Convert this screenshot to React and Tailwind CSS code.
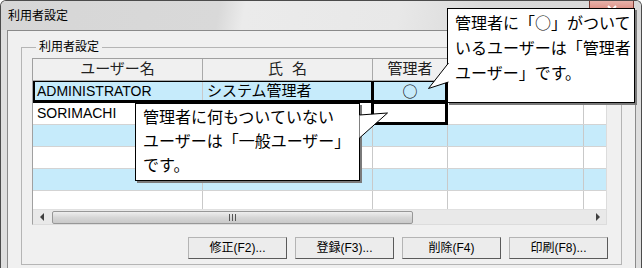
import React from "react";

const FONT = "font-['Liberation_Sans','Noto_Sans_CJK_JP',sans-serif]";

function Cell({ w, children, className = "", last = false }) {
  return (
    <div
      className={`relative h-full flex items-center shrink-0 ${last ? "flex-1" : "border-r border-[#c9c9c9]"} ${className}`}
      style={w ? { width: w } : undefined}
    >
      {children}
    </div>
  );
}

function Row({ blue, name = "", full = "", admin = "", selRow = false, selCell = false }) {
  return (
    <div className={`relative flex h-[22px] shrink-0 border-b border-[#d3d3d3] ${blue ? "bg-[#c6ebfb]" : "bg-white"}`}>
      <Cell w={170} className="pl-[4px] text-[14px] text-black">{name}</Cell>
      <Cell w={170} className="pl-[4px] text-[15px] text-black">{full}</Cell>
      <Cell w={75} className="justify-center text-[15px] text-black font-['Noto_Sans_CJK_JP',sans-serif]">
        {admin}
        {selCell && (
          <div className="absolute left-[-2px] right-[-1px] top-[-2px] bottom-[-1px] border-[3px] border-black z-10" />
        )}
      </Cell>
      <Cell w={136} />
      <Cell last />
      {selRow && (
        <div className="absolute left-[-1px] right-0 top-[-2px] bottom-[-1px] border-[3px] border-black z-10 pointer-events-none" />
      )}
    </div>
  );
}

function Button({ children }) {
  return (
    <div className="w-[99px] h-[22px] flex items-center justify-center text-[12px] text-black bg-[#ececec] border border-[#b4b4b4] border-r-[#5a5a5a] border-b-[#5a5a5a]">
      {children}
    </div>
  );
}

export default function App() {
  return (
    <div className={`relative w-[642px] h-[268px] overflow-hidden ${FONT}`}>
      <div className="w-full h-full flex flex-col border-l border-r border-t border-[#4b4b4b] rounded-t-[6px] bg-[#dedede]">
        {/* Title bar */}
        <div className="h-[29px] shrink-0 flex items-start justify-between bg-[linear-gradient(100deg,#d6d6d6_0%,#d9d9d9_34%,#ebebeb_38%,#e8e8e8_62%,#dadada_75%,#d8d8d8_100%)] rounded-t-[5px]">
          <div className="h-full flex items-center pl-[7px] text-[12px] text-black">利用者設定</div>
          <div className="mr-[7px] w-[45px] h-[19px] rounded-b-[4px] border border-t-0 border-[#7a3a32] bg-[linear-gradient(180deg,#e7b2aa,#d0685a)] flex items-center justify-center">
            <svg width="10" height="10" viewBox="0 0 10 10">
              <path d="M1 1 L9 9 M9 1 L1 9" stroke="white" strokeWidth="2" />
            </svg>
          </div>
        </div>
        {/* Client */}
        <div className="flex-1 ml-[6px] mr-[5px] border-l border-t border-r border-[#8a8a8a] bg-[#f0f0f0] flex flex-col">
          <fieldset className="mt-[9px] ml-[13px] mr-[13px] border border-[#b5b5b5] pl-[10px] pr-[13px] pb-[5px] flex flex-col">
            <legend className="ml-[4px] px-[3px] text-[12px] leading-[14px] text-black">利用者設定</legend>
            <div className="mt-[4px] w-[575px] h-[167px] border border-[#a0a0a0] border-r-[#dcdcdc] border-b-[#dcdcdc] bg-white flex flex-col overflow-hidden">
              {/* header */}
              <div className="flex h-[22px] shrink-0 bg-[#f0f0f0] border-b border-[#a9a9a9] text-[15px] text-[#222]">
                <div className="w-[170px] border-r border-[#a9a9a9] flex items-center justify-center">ユーザー名</div>
                <div className="w-[170px] border-r border-[#a9a9a9] flex items-center justify-center gap-[9px]">
                  <span>氏</span>
                  <span>名</span>
                </div>
                <div className="w-[75px] border-r border-[#a9a9a9] flex items-center justify-center">管理者</div>
                <div className="w-[136px] border-r border-[#a9a9a9]" />
                <div className="flex-1" />
              </div>
              {/* rows */}
              <div className="flex-1 overflow-hidden flex flex-col">
                <Row blue name="ADMINISTRATOR" full="システム管理者" admin="○" selRow selCell />
                <Row name="SORIMACHI" selCell />
                <Row blue />
                <Row />
                <Row blue />
                <Row />
              </div>
              {/* scrollbar */}
              <div className="h-[15px] shrink-0 flex items-center bg-[#e9e9e9] border-t border-[#e0e0e0]">
                <div className="w-[18px] h-full flex items-center justify-center">
                  <div className="w-0 h-0 border-y-[4px] border-y-transparent border-r-[4px] border-r-[#404040]" />
                </div>
                <div className="ml-[1px] w-[361px] h-[13px] rounded-[2px] border border-[#979797] bg-[linear-gradient(180deg,#eeeeee,#d6d6d6_50%,#c9c9c9)] flex items-center justify-center gap-[2px]">
                  <div className="w-px h-[7px] bg-[#555]" />
                  <div className="w-px h-[7px] bg-[#555]" />
                  <div className="w-px h-[7px] bg-[#555]" />
                </div>
                <div className="flex-1" />
                <div className="w-[17px] h-full flex items-center justify-center">
                  <div className="w-0 h-0 border-y-[4px] border-y-transparent border-l-[4px] border-l-[#404040]" />
                </div>
              </div>
            </div>
            <div className="mt-[12px] flex justify-end gap-[8px]">
              <Button>修正(F2)...</Button>
              <Button>登録(F3)...</Button>
              <Button>削除(F4)</Button>
              <Button>印刷(F8)...</Button>
            </div>
          </fieldset>
        </div>
      </div>

      {/* Right callout */}
      <div className="absolute left-[447px] top-[8px] w-[188px] h-[95px] bg-white border border-black shadow-[2px_2px_0_#7a7a7a] z-20 pl-[7px] pt-[1px] text-[16px] leading-[25px] text-black">
        <div>
          管理者に「<span className="font-['Noto_Sans_CJK_JP',sans-serif]">○</span>」がついて
        </div>
        <div>いるユーザーは「管理者</div>
        <div>ユーザー」です。</div>
      </div>
      <svg className="absolute left-[420px] top-[55px] z-30" width="30" height="40" viewBox="0 0 30 40">
        <polygon points="28.5,8 8.5,33.5 28.5,27" fill="white" />
        <polyline points="28.5,8 8.5,33.5 28.5,27" fill="none" stroke="black" strokeWidth="1" />
      </svg>

      {/* Left callout */}
      <div className="absolute left-[135px] top-[103px] w-[225px] h-[78px] bg-white border border-black shadow-[2px_2px_0_#7a7a7a] z-20 pl-[7px] pt-[2px] text-[16px] leading-[24px] text-black">
        <div>管理者に何もついていない</div>
        <div>ユーザーは「一般ユーザー」</div>
        <div>です。</div>
      </div>
      <svg className="absolute left-[356px] top-[105px] z-30" width="40" height="40" viewBox="0 0 40 40">
        <polygon points="3.5,10 31.5,8 3.5,33" fill="white" />
        <polyline points="3.5,10 31.5,8 3.5,33" fill="none" stroke="black" strokeWidth="1" />
      </svg>
    </div>
  );
}
